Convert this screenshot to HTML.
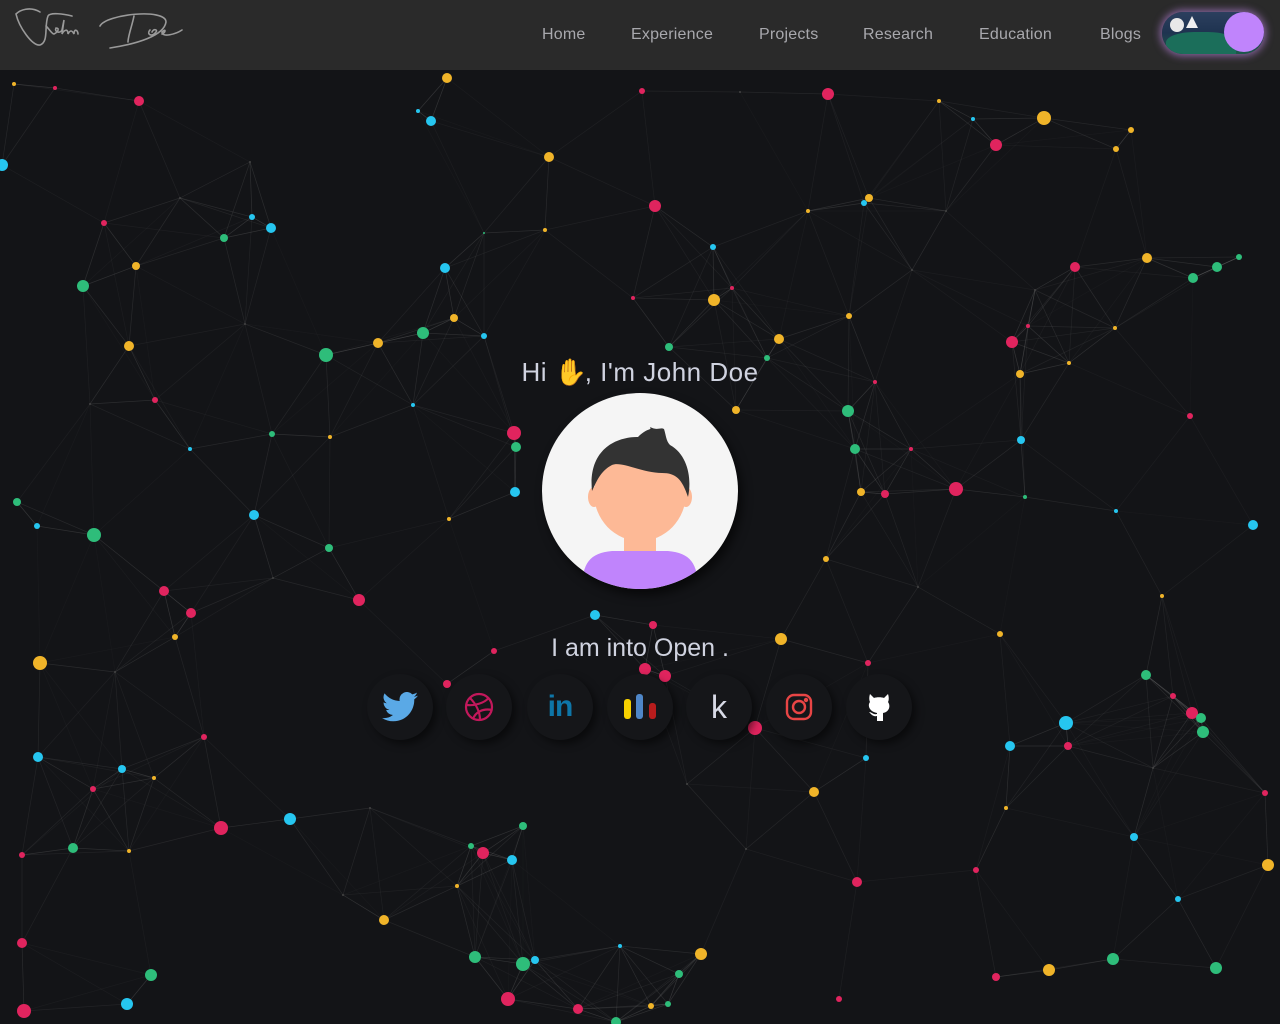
<!DOCTYPE html>
<html><head><meta charset="utf-8">
<style>
*{margin:0;padding:0;box-sizing:border-box}
body{width:1280px;height:1024px;background:#131417;overflow:hidden;font-family:"Liberation Sans",sans-serif;position:relative}
#bg{position:absolute;left:0;top:0}
header{position:absolute;left:0;top:0;width:1280px;height:70px;background:#2a2a2a;z-index:2}
.logo{position:absolute;left:14px;top:2px}
nav a{position:absolute;top:26px;color:#a8a8ad;font-size:16px;text-decoration:none;letter-spacing:.2px}
.tog{position:absolute;left:1162px;top:12px;width:102px;height:42px;border-radius:21px;background:linear-gradient(180deg,#2c3f5e,#1e3350 50%,#1d5a4a);box-shadow:0 0 8px 2px rgba(200,140,240,.6);overflow:hidden}
.knob{position:absolute;left:1224px;top:12px;width:40px;height:40px;border-radius:50%;background:#c084fc;z-index:3}
.hi{position:absolute;top:357px;left:0;width:1280px;text-align:center;color:#d0d3e0;font-size:26px;z-index:1;letter-spacing:.5px}
.av{position:absolute;left:542px;top:393px;width:196px;height:196px;border-radius:50%;background:#f5f5f5;overflow:hidden;box-shadow:4px 6px 10px rgba(0,0,0,.6);z-index:1}
.into{position:absolute;top:634px;left:0;width:1280px;text-align:center;color:#d0d3e0;font-size:25px;z-index:1}
.ic{position:absolute;top:674px;width:66px;height:66px;border-radius:50%;background:#151619;box-shadow:4px 4px 8px rgba(0,0,0,.5);z-index:1;display:flex;align-items:center;justify-content:center}
</style></head><body>
<svg id="bg" width="1280" height="1024"></svg>
<header>
<svg class="logo" width="180" height="50" viewBox="0 0 180 50" fill="none" stroke="#9a9a9a" stroke-width="1.6" stroke-linecap="round">
<path d="M26 10 C16 4 6 8 2 12 C5 25 18 44 26 43 C35 40 30 24 34 14 C36 10 50 12 58 14"/>
<path d="M32 24 C36 28 38 32 40 32 C44 30 46 26 42 26 C40 30 46 32 48 28 L50 18 L48 32 C50 28 54 26 54 32 C56 28 58 28 60 32 C60 26 64 28 64 32"/>
<path d="M86 24 C92 12 152 6 152 20 C150 34 122 42 96 46"/>
<path d="M120 14 C118 24 114 34 114 40"/>
<path d="M136 28 C132 32 138 36 142 30 C144 28 140 26 138 30 M148 32 C152 30 152 26 148 30 C148 36 162 32 168 28"/>
</svg>
<nav><a style="left:542px">Home</a><a style="left:631px">Experience</a><a style="left:759px">Projects</a><a style="left:863px">Research</a><a style="left:979px">Education</a><a style="left:1100px">Blogs</a></nav>
<div class="tog">
<div style="position:absolute;left:8px;top:6px;width:14px;height:14px;border-radius:50%;background:#e8e8e8"></div>
<div style="position:absolute;left:24px;top:4px;width:0;height:0;border-left:6px solid transparent;border-right:6px solid transparent;border-bottom:12px solid #f0f0f0"></div>
<div style="position:absolute;left:4px;top:20px;width:70px;height:26px;border-radius:40% 40% 0 0;background:#1b6e5a"></div>
</div>
<div class="knob"></div>
</header>
<div class="hi">Hi <span style="color:#f5c431;display:inline-block;width:30px">✋</span>, I'm John Doe</div>
<div class="av">
<svg width="196" height="196" viewBox="0 0 196 196">
<rect x="82" y="130" width="32" height="44" rx="14" fill="#fdb996"/>
<path d="M40 196 C40 170 48 160 70 158 L126 158 C148 160 156 170 156 196Z" fill="#c084fc"/>
<ellipse cx="98" cy="100" rx="46" ry="48" fill="#fdb996"/>
<ellipse cx="52" cy="104" rx="6" ry="10" fill="#fdb996"/>
<ellipse cx="144" cy="104" rx="6" ry="10" fill="#fdb996"/>
<path d="M50 98 C46 60 70 44 96 44 C106 34 110 38 108 34 C116 38 118 34 122 36 C124 42 124 48 128 52 C146 62 150 86 146 104 C140 86 134 80 120 80 C100 80 80 68 70 72 C58 78 54 90 50 98Z" fill="#333"/>
</svg></div>
<div class="into">I am into Open .</div>
<div class="ic" style="left:367px"><svg width="36" height="30" viewBox="0 0 24 20"><path d="M24 2.4a10 10 0 0 1-2.8.8A5 5 0 0 0 23.3.4a10 10 0 0 1-3.1 1.2A4.9 4.9 0 0 0 11.8 6 14 14 0 0 1 1.7.9a4.9 4.9 0 0 0 1.5 6.6 4.9 4.9 0 0 1-2.2-.6 4.9 4.9 0 0 0 3.900 4.9 5 5 0 0 1-2.2.1 4.9 4.9 0 0 0 4.6 3.4A9.9 9.9 0 0 1 0 17.3 14 14 0 0 0 7.5 19.5c9.1 0 14-7.5 14-14v-.6A10 10 0 0 0 24 2.4z" fill="#5aa9e6"/></svg></div>
<div class="ic" style="left:446px"><svg width="30" height="30" viewBox="0 0 30 30" fill="none" stroke="#c2185b" stroke-width="2.2"><circle cx="15" cy="15" r="13"/><path d="M6 6c6 6 10 14 10 22M2.5 13c8 1 18-2 22-7M9 27c2-6 9-11 19-9"/></svg></div>
<div class="ic" style="left:527px"><span style="color:#0e76a8;font-weight:bold;font-size:30px;letter-spacing:-1px">in</span></div>
<div class="ic" style="left:607px"><svg width="34" height="28"><rect x="1" y="6" width="7" height="20" rx="3" fill="#f7d100"/><rect x="13" y="1" width="7" height="25" rx="3" fill="#4e86c8"/><rect x="26" y="10" width="7" height="16" rx="3" fill="#b71c1c"/></svg></div>
<div class="ic" style="left:686px"><span style="color:#d8dae6;font-size:32px">k</span></div>
<div class="ic" style="left:766px"><svg width="28" height="28" viewBox="0 0 28 28" fill="none" stroke="#e84545" stroke-width="2.4"><rect x="2" y="2" width="24" height="24" rx="7"/><circle cx="14" cy="14" r="6"/><circle cx="21" cy="7" r="1" fill="#e84545"/></svg></div>
<div class="ic" style="left:846px"><svg width="26" height="30" viewBox="0 0 26 30"><path d="M4 2 L8 6 C10 5 16 5 18 6 L22 2 C23 5 23 8 22 10 C25 14 23 20 17 21 L17 29 L11 29 L11 24 C7 25 5 22 3 20 C6 20 7 23 11 22 L11 21 C4 20 1 14 4 10 C3 8 3 5 4 2Z" fill="#fff"/></svg></div>
<script>
var P="447,78,y,5;431,121,b,5;139,101,r,5;2,165,b,6;549,157,y,5;655,206,r,6;828,94,r,6;1044,118,y,7;996,145,r,6;1131,130,y,3;1116,149,y,3;869,198,y,4;864,203,b,3;271,228,b,5;224,238,g,4;252,217,b,3;104,223,r,3;136,266,y,4;83,286,g,6;129,346,y,5;445,268,b,5;454,318,y,4;423,333,g,6;378,343,y,5;326,355,g,7;484,336,b,3;713,247,b,3;714,300,y,6;732,288,r,2;779,339,y,5;669,347,g,4;767,358,g,3;849,316,y,3;1075,267,r,5;1147,258,y,5;1193,278,g,5;1217,267,g,5;1239,257,g,3;1012,342,r,6;1020,374,y,4;1028,326,r,2;1069,363,y,2;1115,328,y,2;875,382,r,2;848,411,g,6;736,410,y,4;514,433,r,7;516,447,g,5;515,492,b,5;155,400,r,3;272,434,g,3;330,437,y,2;413,405,b,2;190,449,b,2;855,449,g,5;911,449,r,2;861,492,y,4;885,494,r,4;956,489,r,7;1021,440,b,4;1025,497,g,2;1116,511,b,2;1190,416,r,3;1253,525,b,5;17,502,g,4;37,526,b,3;94,535,g,7;254,515,b,5;329,548,g,4;449,519,y,2;164,591,r,5;191,613,r,5;175,637,y,3;359,600,r,6;826,559,y,3;595,615,b,5;653,625,r,4;494,651,r,3;447,684,r,4;40,663,y,7;645,669,r,6;665,676,r,6;781,639,y,6;868,663,r,3;1000,634,y,3;1162,596,y,2;1146,675,g,5;1173,696,r,3;1192,713,r,6;1201,718,g,5;1203,732,g,6;1066,723,b,7;1068,746,r,4;1010,746,b,5;755,728,r,7;866,758,b,3;814,792,y,5;204,737,r,3;38,757,b,5;122,769,b,4;154,778,y,2;93,789,r,3;221,828,r,7;290,819,b,6;22,855,r,3;73,848,g,5;129,851,y,2;523,826,g,4;471,846,g,3;483,853,r,6;512,860,b,5;457,886,y,2;857,882,r,5;976,870,r,3;1006,808,y,2;1134,837,b,4;1268,865,y,6;1178,899,b,3;1265,793,r,3;384,920,y,5;22,943,r,5;151,975,g,6;127,1004,b,6;24,1011,r,7;475,957,g,6;523,964,g,7;535,960,b,4;508,999,r,7;578,1009,r,5;620,946,b,2;679,974,g,4;701,954,y,6;668,1004,g,3;651,1006,y,3;616,1022,g,5;839,999,r,3;996,977,r,4;1049,970,y,6;1113,959,g,6;1216,968,g,6;642,91,r,3;939,101,y,2;973,119,b,2;418,111,b,2;14,84,y,2;55,88,r,2;545,230,y,2;633,298,r,2;808,211,y,2;484,233,g,1;180,198,w,1;250,162,w,1;245,324,w,1;90,404,w,1;273,578,w,1;115,672,w,1;370,808,w,1;343,895,w,1;740,92,w,1;946,211,w,1;912,270,w,1;918,587,w,1;687,784,w,1;746,849,w,1;1153,768,w,1;1035,290,w,1".split(";").map(function(s){s=s.split(",");return[+s[0],+s[1],s[2],+s[3]]});
var C={r:"#e0245e",y:"#f0b429",b:"#26c6f0",g:"#2ebd7a",w:"#444"};
var h="";
for(var i=0;i<P.length;i++)for(var j=i+1;j<P.length;j++){var dx=P[i][0]-P[j][0],dy=P[i][1]-P[j][1],d=Math.sqrt(dx*dx+dy*dy);if(d<140)h+='<line x1="'+P[i][0]+'" y1="'+P[i][1]+'" x2="'+P[j][0]+'" y2="'+P[j][1]+'" stroke="#8a8a8a" stroke-opacity="'+(0.3*(1-d/140)+0.05).toFixed(2)+'" stroke-width="0.7"/>';}
P.forEach(function(p){h+='<circle cx="'+p[0]+'" cy="'+p[1]+'" r="'+p[3]+'" fill="'+C[p[2]]+'"/>';});
document.getElementById("bg").innerHTML=h;
</script>
</body></html>
